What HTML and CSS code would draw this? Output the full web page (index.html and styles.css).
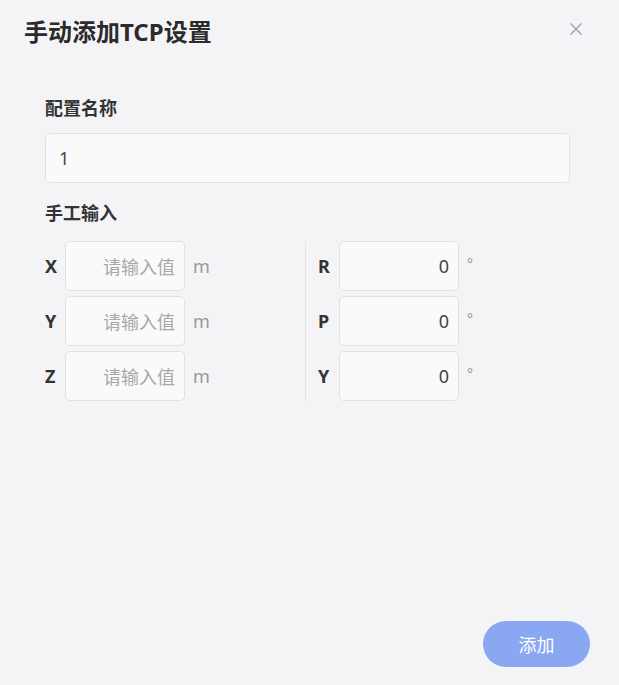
FILE: index.html
```html
<!DOCTYPE html>
<html lang="zh">
<head>
<meta charset="utf-8">
<title>手动添加TCP设置</title>
<link rel="stylesheet" href="styles.css">
</head>
<body>
<div class="dialog">
  <header class="header">
    <h1 class="title">手动添加TCP设置</h1>
    <button class="close" aria-label="关闭">
      <svg width="14" height="14" viewBox="0 0 14 14"><path d="M1.5 1.5 L12.5 12.5 M12.5 1.5 L1.5 12.5" stroke="#8c9cb1" stroke-width="1.2" fill="none"/></svg>
    </button>
  </header>
  <main class="content">
    <div class="label first">配置名称</div>
    <div class="field name-field">1</div>
    <div class="label second">手工输入</div>
    <div class="grid">
      <div class="col left">
        <div class="row"><span class="axis">X</span><div class="field num placeholder">请输入值</div><span class="unit">m</span></div>
        <div class="row"><span class="axis">Y</span><div class="field num placeholder">请输入值</div><span class="unit">m</span></div>
        <div class="row"><span class="axis">Z</span><div class="field num placeholder">请输入值</div><span class="unit">m</span></div>
      </div>
      <div class="divider"></div>
      <div class="col right">
        <div class="row"><span class="axis">R</span><div class="field num">0</div><span class="deg">°</span></div>
        <div class="row"><span class="axis">P</span><div class="field num">0</div><span class="deg">°</span></div>
        <div class="row"><span class="axis">Y</span><div class="field num">0</div><span class="deg">°</span></div>
      </div>
    </div>
  </main>
  <footer class="footer">
    <button class="add">添加</button>
  </footer>
</div>
</body>
</html>
```
FILE: styles.css
```css
html, body {
  margin: 0;
  padding: 0;
  height: 100%;
}
body {
  background: #f4f4f6;
  font-family: "Noto Sans", "Noto Sans CJK SC", sans-serif;
  color: #333;
}
.dialog {
  display: flex;
  flex-direction: column;
  height: 100%;
}
.header {
  display: flex;
  align-items: center;
  justify-content: space-between;
  padding: 16px 36px 0 24px;
  height: 32px;
}
.title {
  margin: 0;
  font-size: 24px;
  line-height: 32px;
  font-weight: 700;
  color: #2b2b2b;
}
.close {
  border: 0;
  background: none;
  padding: 0;
  width: 14px;
  height: 14px;
  display: flex;
  margin-top: -6px;
}
.content {
  padding: 0 49px 0 45px;
}
.label {
  font-size: 18px;
  line-height: 24px;
  font-weight: 700;
  color: #333;
}
.label.first { margin-top: 48px; }
.label.second { margin-top: 18px; }
.field {
  box-sizing: border-box;
  height: 50px;
  background: #fafafa;
  border: 1px solid #e2e2e4;
  border-radius: 5px;
  display: flex;
  align-items: center;
  font-size: 18px;
  color: #444;
}
.name-field {
  margin-top: 13px;
  padding-left: 13px;
}
.grid {
  display: flex;
  margin-top: 16px;
}
.col {
  display: flex;
  flex-direction: column;
  gap: 5px;
}
.left { width: 260px; }
.right { padding-left: 12px; }
.divider {
  width: 1px;
  background: #e4e4e8;
}
.row {
  display: flex;
  align-items: center;
  height: 50px;
}
.axis {
  font-size: 18px;
  font-weight: 700;
  color: #333;
  width: 20px;
}
.right .axis { width: 21px; }
.num {
  width: 120px;
  justify-content: flex-end;
  padding-right: 9px;
}
.placeholder {
  color: #a8a8a8;
  font-size: 18px;
}
.unit {
  margin-left: 8px;
  font-size: 18px;
  color: #999;
}
.deg {
  margin-left: 8px;
  font-size: 14px;
  color: #999;
  align-self: flex-start;
  margin-top: 13px;
}
.footer {
  margin-top: auto;
  display: flex;
  justify-content: flex-end;
  padding: 0 29px 18px 0;
}
.add {
  width: 107px;
  height: 46px;
  border: 0;
  border-radius: 23px;
  background: #8aa8f2;
  color: #fff;
  font-family: "Noto Sans CJK SC", sans-serif;
  font-size: 18px;
}
```
